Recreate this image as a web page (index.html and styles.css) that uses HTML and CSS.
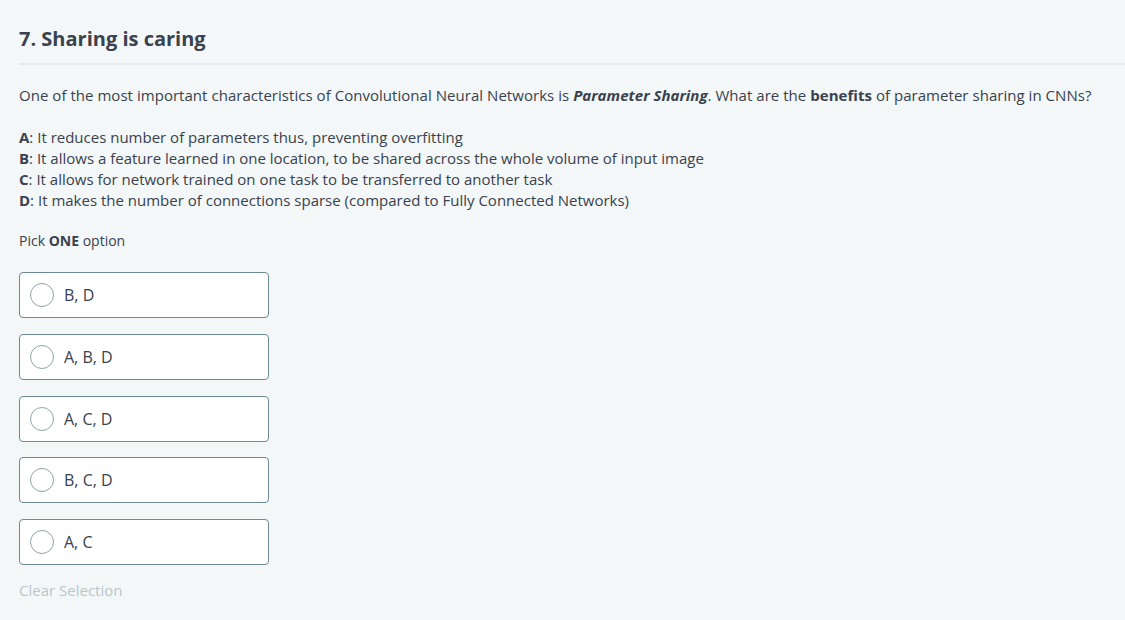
FILE: index.html
```html
<!DOCTYPE html>
<html>
<head>
<meta charset="utf-8">
<link rel="stylesheet" href="styles.css">
</head>
<body>
<div class="page">
  <h1 class="title">7. Sharing is caring</h1>
  <div class="content">
    <p class="question">One of the most important characteristics of Convolutional Neural Networks is <b><i>Parameter Sharing</i></b>. What are the <b>benefits</b> of parameter sharing in CNNs?</p>
    <div class="choices">
      <div><b>A</b>: It reduces number of parameters thus, preventing overfitting</div>
      <div><b>B</b>: It allows a feature learned in one location, to be shared across the whole volume of input image</div>
      <div><b>C</b>: It allows for network trained on one task to be transferred to another task</div>
      <div><b>D</b>: It makes the number of connections sparse (compared to Fully Connected Networks)</div>
    </div>
    <p class="pick">Pick <b>ONE</b> option</p>
    <div class="options">
      <label class="option"><span class="radio"></span><span class="opt-text">B, D</span></label>
      <label class="option"><span class="radio"></span><span class="opt-text">A, B, D</span></label>
      <label class="option"><span class="radio"></span><span class="opt-text">A, C, D</span></label>
      <label class="option"><span class="radio"></span><span class="opt-text">B, C, D</span></label>
      <label class="option"><span class="radio"></span><span class="opt-text">A, C</span></label>
    </div>
    <div class="clear">Clear Selection</div>
  </div>
</div>
</body>
</html>
```
FILE: styles.css
```css
html, body {
  margin: 0;
  padding: 0;
  background: #f3f7f7;
}
body {
  font-family: "Open Sans", "Liberation Sans", sans-serif;
  color: #39424e;
  width: 1125px;
  height: 620px;
  overflow: hidden;
}
.page {
  padding-left: 19px;
  padding-top: 24px;
}
.title {
  margin: 0;
  font-size: 20px;
  font-weight: 700;
  line-height: 30px;
  padding-bottom: 9px;
  border-bottom: 2px solid #e6ecec;
}
.content {
  padding-top: 19px;
  font-size: 15px;
}
.question {
  margin: 0;
  line-height: 22px;
  letter-spacing: 0.0025em;
}
.choices {
  margin-top: 21px;
  line-height: 21px;
}
.pick {
  margin: 19px 0 0;
  font-size: 14px;
  line-height: 22px;
}
.options {
  margin-top: 20px;
  display: flex;
  flex-direction: column;
  gap: 15.75px;
}
.option {
  box-sizing: border-box;
  width: 250px;
  height: 46px;
  background: #fff;
  border: 1px solid #6e8b95;
  border-radius: 4px;
  display: flex;
  align-items: center;
  padding-left: 10px;
}
.radio {
  box-sizing: border-box;
  width: 24px;
  height: 24px;
  border-radius: 50%;
  border: 1px solid #8ea3a8;
  background: #fff;
}
.opt-text {
  margin-left: 10px;
  font-size: 16px;
}
.clear {
  margin-top: 14px;
  color: #b9c7ca;
  font-size: 15px;
  line-height: 22px;
}
```
